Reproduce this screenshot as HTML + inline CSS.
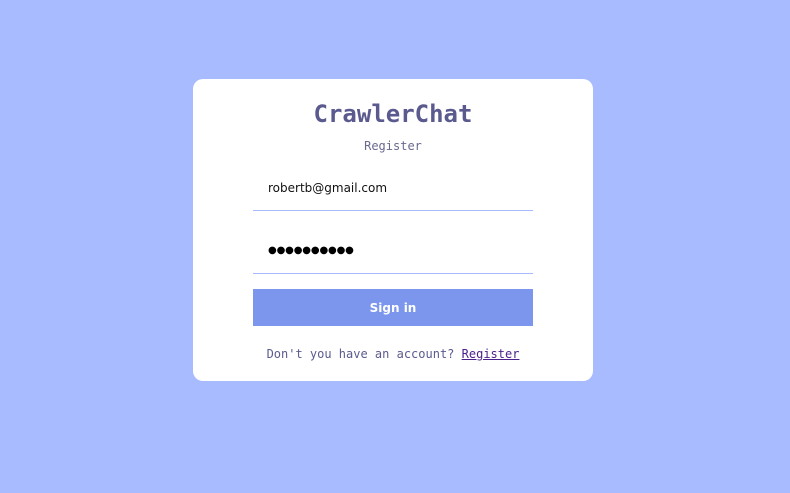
<!DOCTYPE html>
<html><head><style>
body{margin:0;width:790px;height:493px;background:#a8bbff;font-family:"DejaVu Sans",sans-serif;position:relative;overflow:hidden}
.card{position:absolute;left:193px;top:79px;width:400px;height:302px;background:#fff;border-radius:10px}
.t{position:absolute;left:0;width:400px;text-align:center;top:21px;font:bold 24px "DejaVu Sans Mono",monospace;color:#5b5a8e}
.r{position:absolute;left:0;width:400px;text-align:center;top:60px;font:12px "DejaVu Sans Mono",monospace;color:#6a6990}
.in{position:absolute;left:60px;width:280px;border-bottom:1px solid #a8bbff}
.e{top:102px;height:30px;font-size:12px;color:#111;padding-left:15px;box-sizing:border-box}
.p{top:166px;height:29px;font-size:10px;padding-left:15px;box-sizing:border-box;color:#000;letter-spacing:-0.15px}
.b{position:absolute;left:60px;top:210px;width:280px;height:37px;background:#7b96ec;color:#fff;font-weight:bold;font-size:12px;text-align:center;line-height:39px}
.f{position:absolute;left:0;width:400px;text-align:center;top:268px;font:12px "DejaVu Sans Mono",monospace;color:#5b5a8e}
.f u{color:#4b1e8a}
</style></head><body>
<div class="card">
<div class="t">CrawlerChat</div>
<div class="r">Register</div>
<div class="in e">robertb@gmail.com</div>
<div class="in p">●●●●●●●●●●</div>
<div class="b">Sign in</div>
<div class="f">Don't you have an account? <u>Register</u></div>
</div>
</body></html>
